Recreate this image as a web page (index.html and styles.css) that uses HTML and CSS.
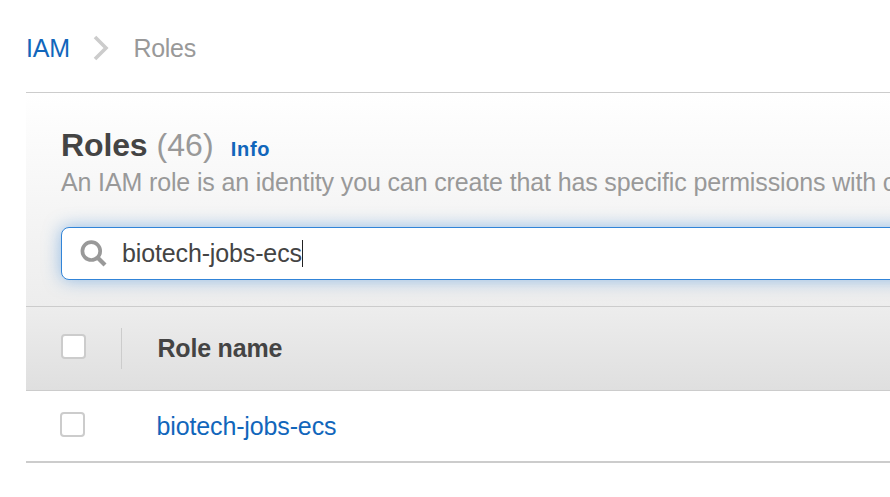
FILE: index.html
```html
<!DOCTYPE html>
<html lang="en">
<head>
<meta charset="utf-8">
<title>IAM Roles</title>
<link rel="stylesheet" href="styles.css">
</head>
<body>
<nav class="breadcrumb">
  <a class="crumb-link" href="#">IAM</a>
  <svg class="chevron" width="16" height="26" viewBox="0 0 16 26"><path d="M2 2 L13 13 L2 24" fill="none" stroke="#ccc" stroke-width="3.6"/></svg>
  <span class="crumb-current">Roles</span>
</nav>
<main class="panel">
  <header class="panel-header">
    <div class="title-row">
      <h1 class="title">Roles</h1>
      <span class="count">(46)</span>
      <a class="info" href="#">Info</a>
    </div>
    <p class="description">An IAM role is an identity you can create that has specific permissions with c</p>
    <div class="search">
      <svg class="search-icon" width="28" height="28" viewBox="0 0 28 28" fill="none" stroke="#999"><circle cx="11.3" cy="11.1" r="8.9" stroke-width="3.7"/><path d="M17.5 17.5 L25 25" stroke-width="4.2"/></svg>
      <span class="query">biotech-jobs-ecs</span><span class="caret"></span>
    </div>
  </header>
  <div class="row head-row">
    <span class="checkbox"></span>
    <span class="divider"></span>
    <span class="column-name">Role name</span>
  </div>
  <div class="row data-row">
    <span class="checkbox"></span>
    <a class="role-link" href="#">biotech-jobs-ecs</a>
  </div>
</main>
</body>
</html>
```
FILE: styles.css
```css
* { box-sizing: border-box; }
body {
  margin: 0;
  height: 497px;
  overflow: hidden;
  background: #fff;
  color: #444;
  font: 25px/32px "Liberation Sans", Arial, sans-serif;
  letter-spacing: -.136px;
  white-space: nowrap;
}
a { color: #1166bb; text-decoration: none; }
.breadcrumb {
  display: flex;
  align-items: center;
  height: 92px;
  padding: 4px 0 0 26px;
}
.crumb-link { width: 67px; }
.chevron { margin-right: 24.5px; }
.crumb-current { letter-spacing: -.3px; }
.crumb-current, .count, .description { color: #999; }
.panel { margin-left: 26px; border-top: 1px solid #ccc; overflow: hidden; }
.panel-header {
  height: 213px;
  padding: 32px 0 0 35px;
  background: linear-gradient(#fff, #ededed);
}
.title-row { display: flex; align-items: baseline; height: 40px; line-height: 40px; }
.title { margin: 0 9px 0 0; font-size: 32px; }
.count { margin-right: 17px; font-size: 32px; letter-spacing: .1px; }
.info { font-size: 20px; font-weight: bold; letter-spacing: .7px; }
.description { margin: 1px 0 0; }
.search {
  display: flex;
  align-items: center;
  width: 900px;
  height: 53px;
  margin-top: 29px;
  padding-left: 18px;
  border: 1px solid #3184d8;
  border-radius: 8px;
  background: #fff;
  box-shadow: 0 0 17px rgba(49, 132, 216, .5);
}
.search-icon { margin-right: 14px; }
.query { margin-top: -2px; }
.caret { width: 1px; height: 27px; background: #222; }
.row { display: flex; align-items: center; }
.head-row {
  height: 85px;
  padding-left: 35px;
  border-top: 1px solid #ccc;
  border-bottom: 1px solid #ccc;
  background: linear-gradient(#ededed, #dfdfdf);
}
.checkbox {
  width: 25px;
  height: 25px;
  margin-top: -3px;
  border: 2px solid #ccc;
  border-radius: 4px;
  background: #fff;
}
.head-row .checkbox { margin-top: -5px; }
.divider { width: 1px; height: 41px; margin: 0 35.5px 0 35px; background: #ccc; }
.column-name { margin-top: -2px; font-weight: bold; letter-spacing: -.2px; }
.data-row { height: 72px; padding-left: 34px; border-bottom: 2px solid #ccc; }
.role-link { margin-left: 71.5px; }
```
